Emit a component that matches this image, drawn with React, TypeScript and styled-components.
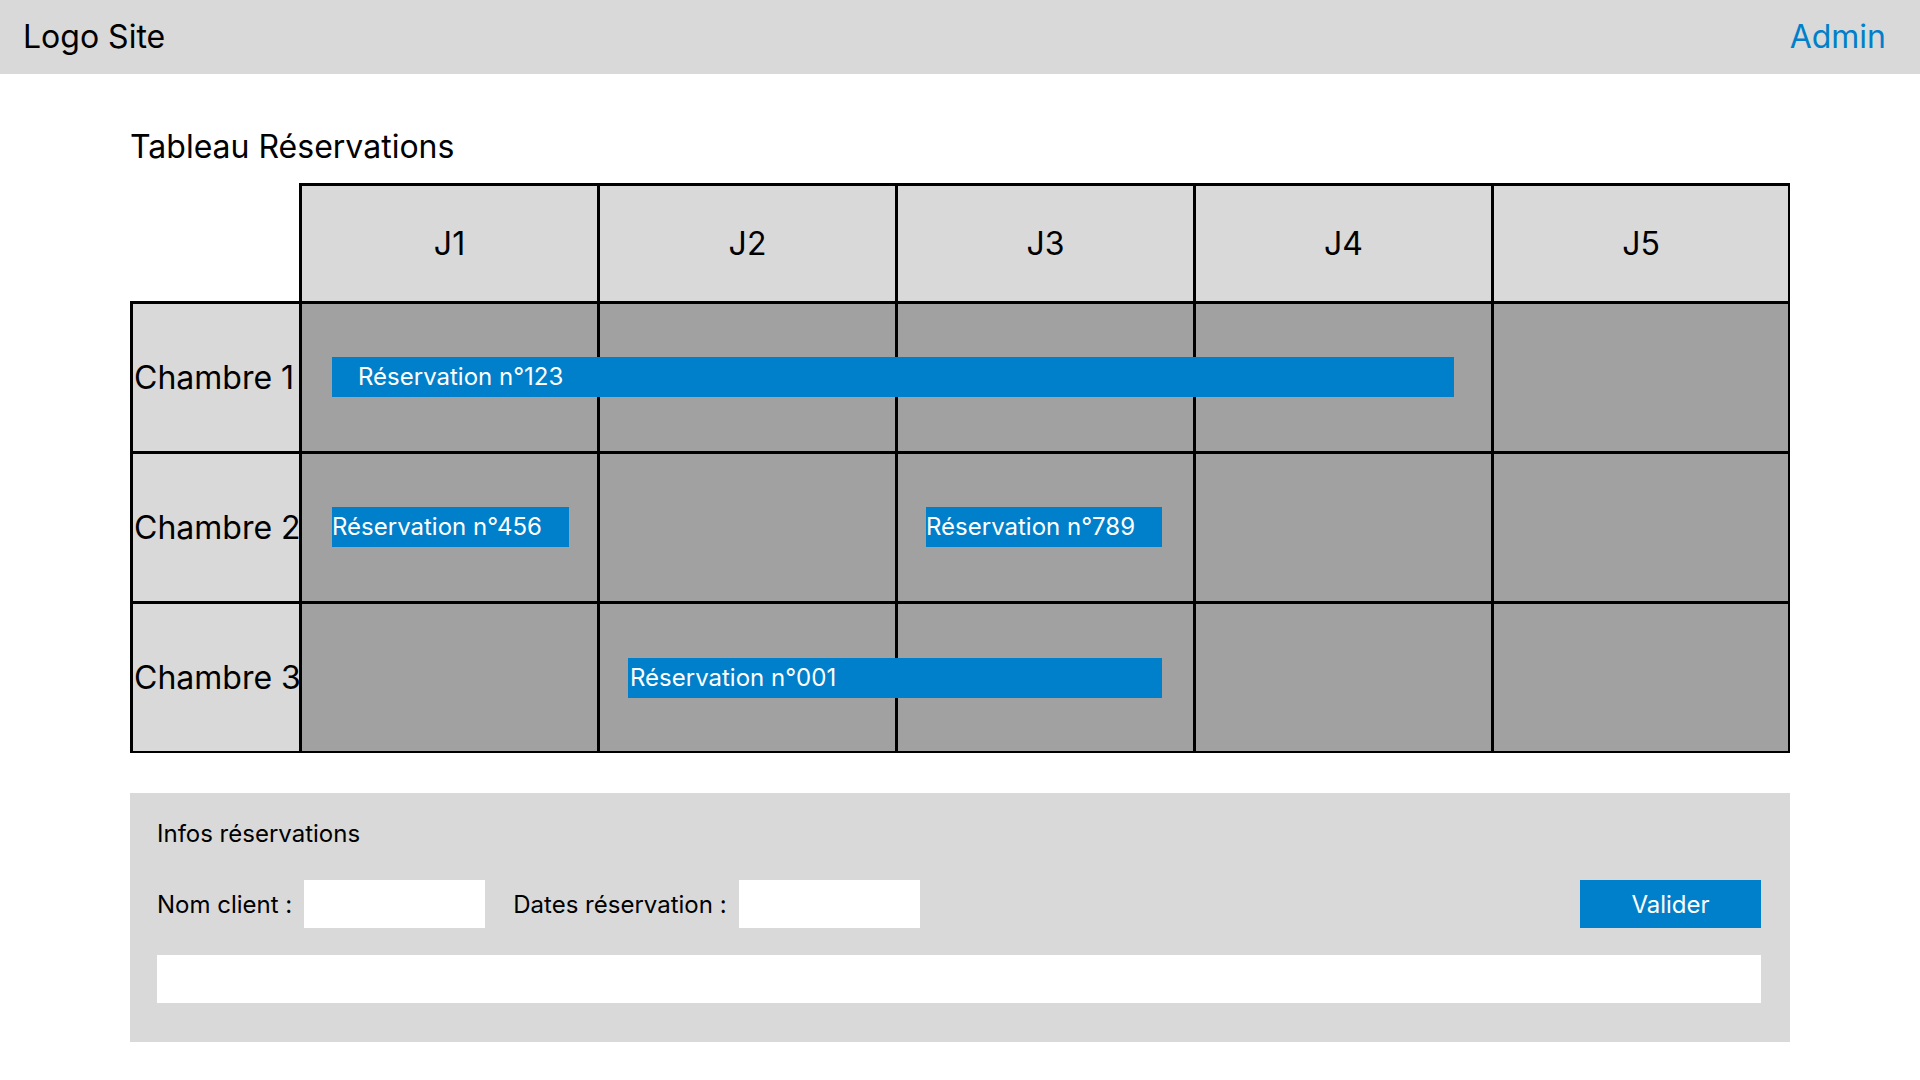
import React from "react";
import styled, { createGlobalStyle } from "styled-components";

const GlobalStyle = createGlobalStyle`
  html, body { margin: 0; padding: 0; background: #ffffff; }
  body { font-family: Inter, "Noto Sans", "Liberation Sans", sans-serif; color: #000; }
  * { box-sizing: border-box; }
`;

const BLUE = "#0080ca";
const LIGHT = "#d9d9d9";
const DARK = "#a1a1a1";

const TopBar = styled.header`
  height: 74px;
  background: ${LIGHT};
  display: flex;
  align-items: center;
  justify-content: space-between;
  padding: 0 34px 0 23px;
`;

const Logo = styled.div`
  font-size: 32px;
  line-height: 38px;
  color: #000;
`;

const AdminLink = styled.a`
  font-size: 32px;
  line-height: 38px;
  color: ${BLUE};
  text-decoration: none;
  cursor: pointer;
`;

const Main = styled.main`
  width: 1660px;
  margin: 0 auto 0 130px;
  padding-top: 54px;
  display: flex;
  flex-direction: column;
`;

const Title = styled.h1`
  margin: 0 0 17px 0;
  font-size: 32px;
  font-weight: 400;
  line-height: 38px;
`;

const Grid = styled.div`
  display: grid;
  grid-template-columns: 169px repeat(4, 298px) 299px;
  grid-template-rows: 118px 150px 150px 152px;
`;

const Corner = styled.div`
  grid-row: 1;
  grid-column: 1;
`;

const DayHead = styled.div<{ $col: number; $last?: boolean }>`
  grid-row: 1;
  grid-column: ${(p) => p.$col};
  background: ${LIGHT};
  border-top: 3px solid #000;
  border-left: 3px solid #000;
  border-right: ${(p) => (p.$last ? "2px solid #000" : "0")};
  display: flex;
  align-items: center;
  justify-content: center;
  font-size: 32px;
  line-height: 38px;
`;

const RoomLabel = styled.div<{ $row: number; $last?: boolean }>`
  grid-row: ${(p) => p.$row};
  grid-column: 1;
  background: ${LIGHT};
  border-top: 3px solid #000;
  border-left: 3px solid #000;
  border-bottom: ${(p) => (p.$last ? "2px solid #000" : "0")};
  display: flex;
  align-items: center;
  padding-left: 1px;
  font-size: 32px;
  line-height: 38px;
  white-space: nowrap;
`;

const Slot = styled.div<{ $row: number; $col: number; $lastRow?: boolean; $lastCol?: boolean }>`
  grid-row: ${(p) => p.$row};
  grid-column: ${(p) => p.$col};
  background: ${DARK};
  border-top: 3px solid #000;
  border-left: 3px solid #000;
  border-right: ${(p) => (p.$lastCol ? "2px solid #000" : "0")};
  border-bottom: ${(p) => (p.$lastRow ? "2px solid #000" : "0")};
`;

const Booking = styled.div<{ $row: number; $from: number; $to: number; $offset: number; $width: number; $pad: number }>`
  grid-row: ${(p) => p.$row};
  grid-column: ${(p) => p.$from} / ${(p) => p.$to};
  align-self: center;
  justify-self: start;
  margin-top: 2px;
  margin-left: ${(p) => p.$offset}px;
  width: ${(p) => p.$width}px;
  height: 40px;
  background: ${BLUE};
  color: #fff;
  display: flex;
  align-items: center;
  padding-left: ${(p) => p.$pad}px;
  font-size: 24px;
  line-height: 30px;
  white-space: nowrap;
`;

const Panel = styled.section`
  margin-top: 40px;
  background: ${LIGHT};
  height: 249px;
  padding: 26px 29px 0 27px;
  display: flex;
  flex-direction: column;
`;

const PanelTitle = styled.div`
  font-size: 24px;
  line-height: 29px;
  margin-bottom: 32px;
`;

const FormRow = styled.div`
  display: flex;
  align-items: center;
  gap: 28px;
  height: 48px;
`;

const Field = styled.label`
  display: flex;
  align-items: center;
  gap: 12px;
  font-size: 24px;
  line-height: 29px;
`;

const TextBox = styled.input`
  width: 181px;
  height: 48px;
  border: 0;
  background: #fff;
  outline: none;
  padding: 0 8px;
  font-family: inherit;
  font-size: 20px;
`;

const SubmitButton = styled.button`
  margin-left: auto;
  width: 181px;
  height: 48px;
  border: 0;
  background: ${BLUE};
  color: #fff;
  font-family: inherit;
  font-size: 24px;
  cursor: pointer;
`;

const WideBox = styled.input`
  margin-top: 27px;
  width: 100%;
  height: 48px;
  border: 0;
  background: #fff;
  outline: none;
  padding: 0 8px;
  font-family: inherit;
  font-size: 20px;
`;

const days = ["J1", "J2", "J3", "J4", "J5"];
const rooms = ["Chambre 1", "Chambre 2", "Chambre 3"];

const bookings = [
  { label: "Réservation n°123", row: 2, from: 2, to: 6, offset: 33, width: 1122, pad: 26 },
  { label: "Réservation n°456", row: 3, from: 2, to: 3, offset: 33, width: 237, pad: 0 },
  { label: "Réservation n°789", row: 3, from: 4, to: 5, offset: 31, width: 236, pad: 0 },
  { label: "Réservation n°001", row: 4, from: 3, to: 5, offset: 31, width: 534, pad: 2 },
];

export default function App() {
  return (
    <>
      <GlobalStyle />
      <TopBar>
        <Logo>Logo Site</Logo>
        <AdminLink>Admin</AdminLink>
      </TopBar>
      <Main>
        <Title>Tableau Réservations</Title>
        <Grid>
          <Corner />
          {days.map((d, i) => (
            <DayHead key={d} $col={i + 2} $last={i === days.length - 1}>
              {d}
            </DayHead>
          ))}
          {rooms.map((r, ri) => (
            <React.Fragment key={r}>
              <RoomLabel $row={ri + 2} $last={ri === rooms.length - 1}>
                {r}
              </RoomLabel>
              {days.map((d, di) => (
                <Slot
                  key={d}
                  $row={ri + 2}
                  $col={di + 2}
                  $lastRow={ri === rooms.length - 1}
                  $lastCol={di === days.length - 1}
                />
              ))}
            </React.Fragment>
          ))}
          {bookings.map((b) => (
            <Booking
              key={b.label}
              $row={b.row}
              $from={b.from}
              $to={b.to}
              $offset={b.offset}
              $width={b.width}
              $pad={b.pad}
            >
              {b.label}
            </Booking>
          ))}
        </Grid>
        <Panel>
          <PanelTitle>Infos réservations</PanelTitle>
          <FormRow>
            <Field>
              Nom client :
              <TextBox type="text" />
            </Field>
            <Field>
              Dates réservation :
              <TextBox type="text" />
            </Field>
            <SubmitButton type="button">Valider</SubmitButton>
          </FormRow>
          <WideBox type="text" />
        </Panel>
      </Main>
    </>
  );
}
